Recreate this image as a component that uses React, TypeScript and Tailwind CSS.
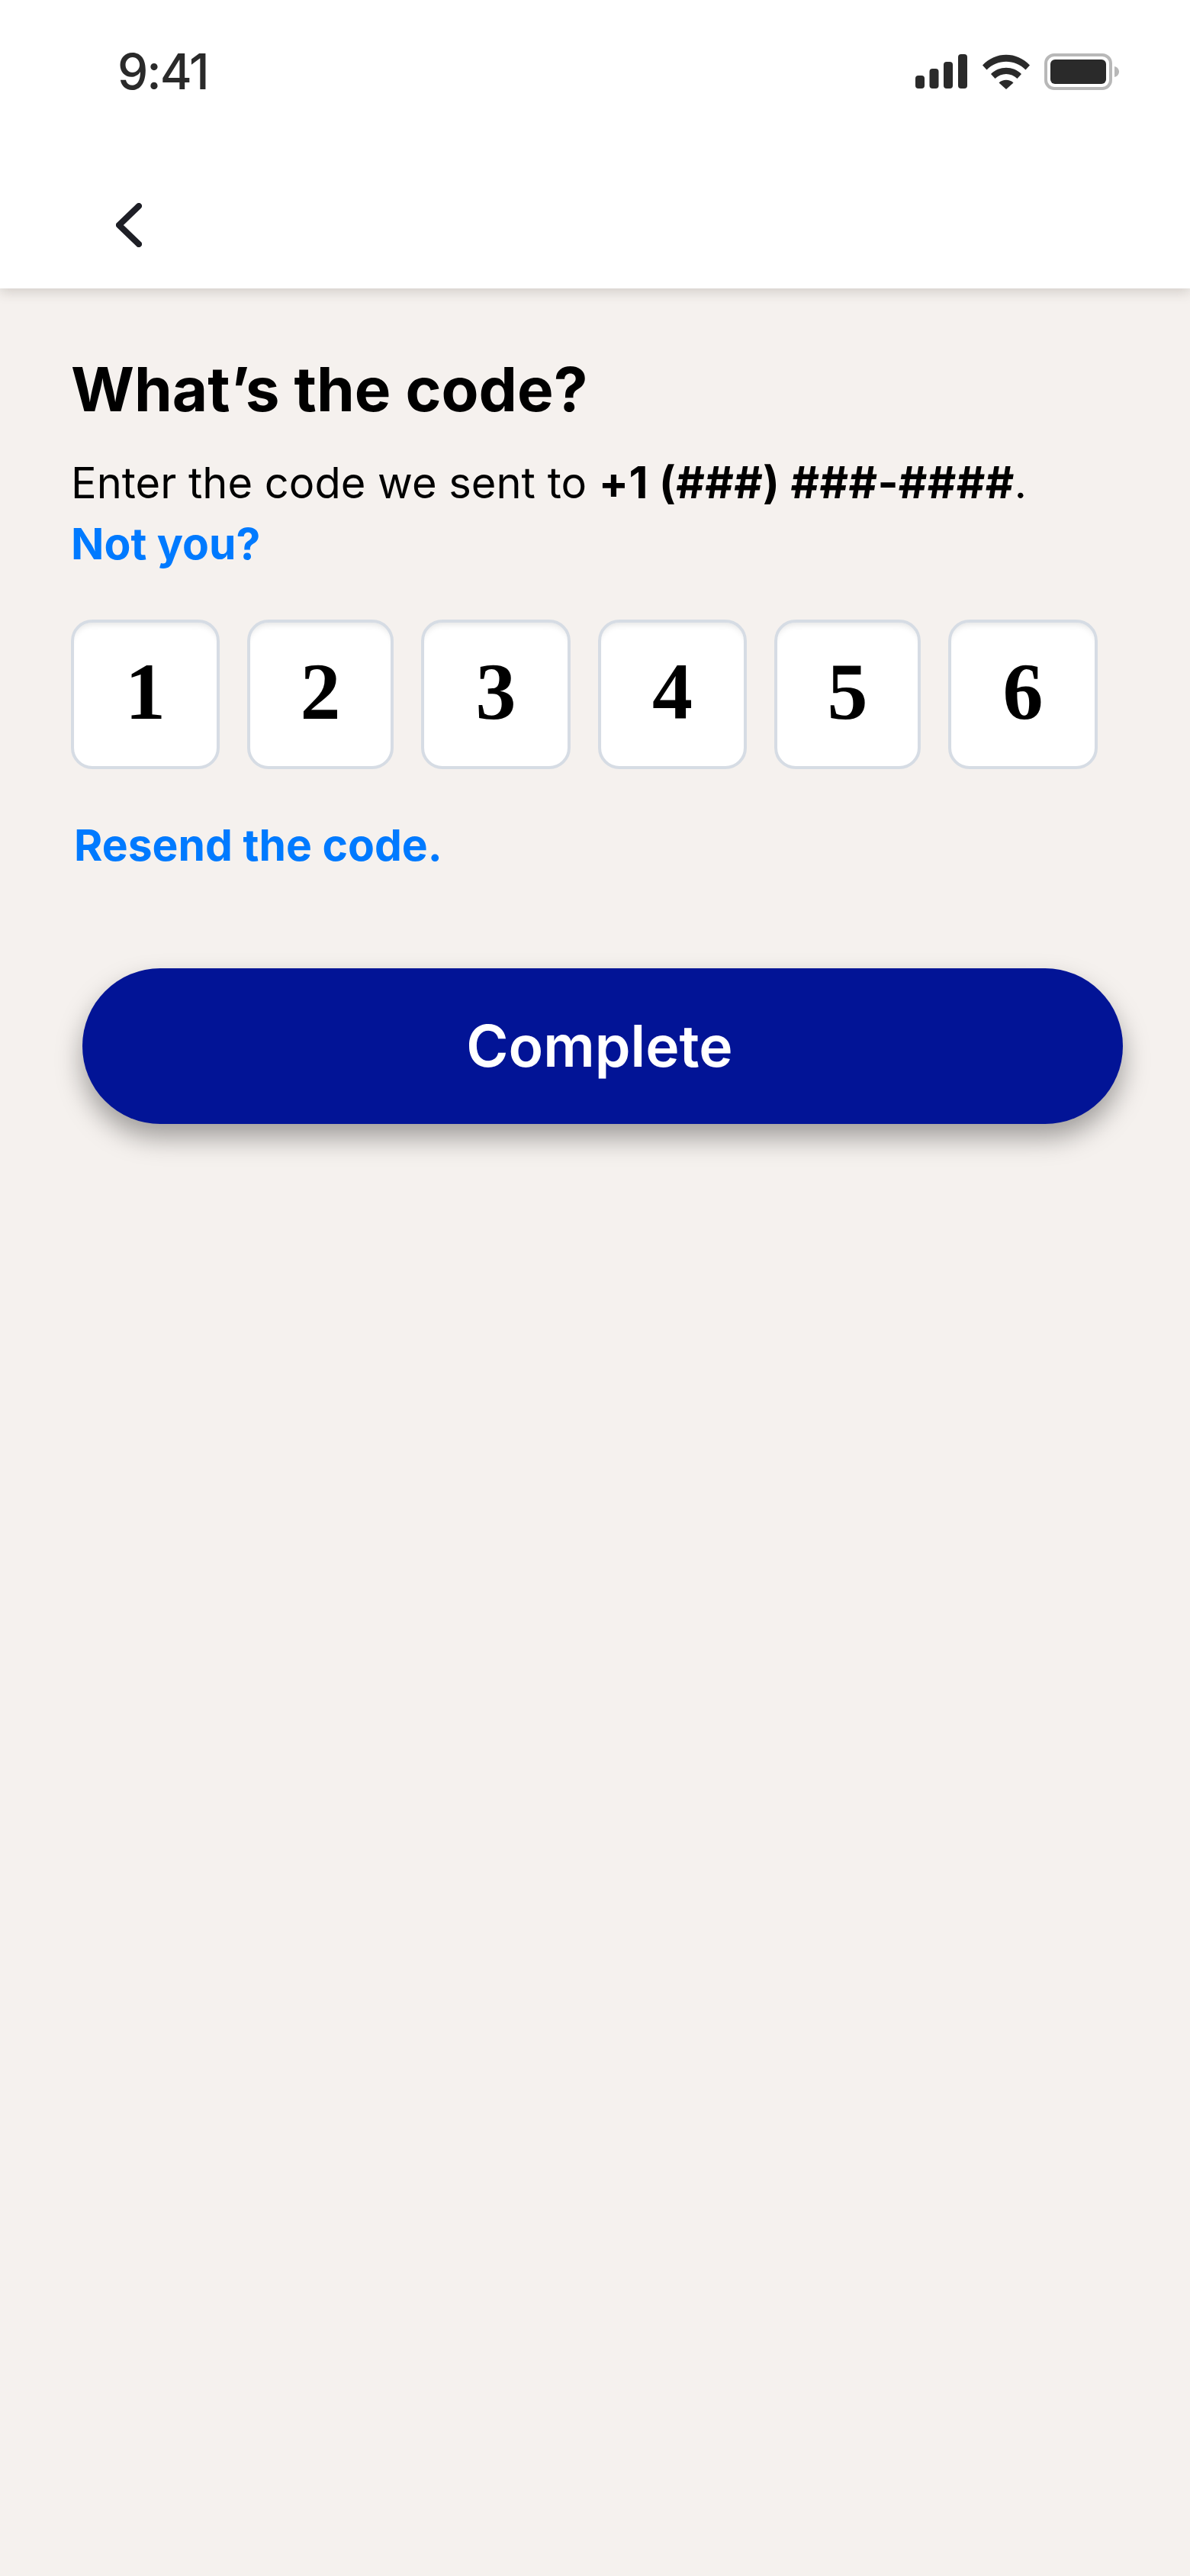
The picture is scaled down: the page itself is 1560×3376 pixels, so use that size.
import React from 'react';

const digits = [
  { value: '1', width: 'w-[195px]' },
  { value: '2', width: 'w-[192px]' },
  { value: '3', width: 'w-[196px]' },
  { value: '4', width: 'w-[195px]' },
  { value: '5', width: 'w-[192px]' },
  { value: '6', width: 'w-[196px]' },
];

function StatusIcons() {
  return (
    <div className="flex items-center">
      <svg width="68" height="46" viewBox="0 0 68 46" className="block">
        <rect x="0" y="28" width="12" height="17" rx="4" fill="#2a2a2a" />
        <rect x="18.5" y="19" width="12" height="26" rx="4" fill="#2a2a2a" />
        <rect x="37" y="10" width="12" height="35" rx="4" fill="#2a2a2a" />
        <rect x="56" y="0" width="12" height="45" rx="4" fill="#2a2a2a" />
      </svg>
      <svg width="62" height="46" viewBox="0 0 62 46" className="ml-5 block">
        <path d="M0 14.5C17 -4 45 -4 62 14.5L56.5 20.5C42.5 6 19.5 6 5.5 20.5Z" fill="#2a2a2a" />
        <path d="M11 26C21.500 15 40.500 15 51 26L45.500 32C37.500 24 24.500 24 16.500 32Z" fill="#2a2a2a" />
        <path d="M21.500 37.500C26.500 32.500 35.500 32.500 40.500 37.500L31 46Z" fill="#2a2a2a" />
      </svg>
      <svg width="98" height="48" viewBox="0 0 98 48" className="ml-[19px] block">
        <rect x="2" y="2" width="85" height="44" rx="11" fill="none" stroke="#b8b8b8" strokeWidth="4" />
        <rect x="8" y="8" width="73" height="32" rx="6" fill="#2a2a2a" />
        <path d="M92 17C96 18 98 21 98 24C98 27 96 30 92 31Z" fill="#b8b8b8" />
      </svg>
    </div>
  );
}

export default function App() {
  return (
    <div className="min-h-[3376px] w-[1560px] bg-[#f5f1ee] font-['Inter',sans-serif] text-black">
      <header className="h-[378px] bg-white shadow-[0_4px_16px_rgba(60,50,40,0.2)]">
        <div className="flex h-[188px] items-center justify-between pl-[154px] pr-[93px]">
          <span className="text-[64px] leading-none font-medium tracking-[-2px] text-[#2a2a2a]">9:41</span>
          <StatusIcons />
        </div>
        <div className="pl-[152px] pt-[78px]">
          <svg width="34" height="58" viewBox="0 0 34 58" className="block">
            <path d="M30 4L4 29L30 54" fill="none" stroke="#1e1f26" strokeWidth="8" strokeLinecap="round" strokeLinejoin="round" />
          </svg>
        </div>
      </header>

      <main className="pl-[93px]">
        <h1 className="pt-[84px] text-[80px] leading-[96px] font-bold">What’s the code?</h1>
        <p className="mt-[34px] text-[56px] leading-[80px]">
          Enter the code we sent to <strong className="text-[58px] font-bold tracking-[0.35px]">+1 (###) ###-####</strong>.
        </p>
        <a className="block text-[57px] leading-[80px] font-bold text-[#007aff]">Not you?</a>

        <div className="mt-[59px] flex gap-9">
          {digits.map((d) => (
            <div
              key={d.value}
              className={`${d.width} flex h-[196px] items-center justify-center rounded-[28px] border-4 border-[#d6dce4] bg-white pb-[8px] font-['Liberation_Serif',serif] text-[106px] font-bold shadow-[inset_0_8px_8px_-6px_rgba(0,0,0,0.12)]`}
            >
              {d.value}
            </div>
          ))}
        </div>

        <a className="mt-[60px] ml-1 block text-[57px] leading-[80px] font-bold text-[#007aff]">Resend the code.</a>
      </main>

      <div className="mt-[121px] pl-[108px]">
        <button className="flex h-[204px] w-[1364px] items-center justify-center rounded-full bg-[#021496] pr-[8px] text-[75px] font-semibold text-white shadow-[0_18px_34px_rgba(0,0,0,0.35)]">
          Complete
        </button>
      </div>
    </div>
  );
}
